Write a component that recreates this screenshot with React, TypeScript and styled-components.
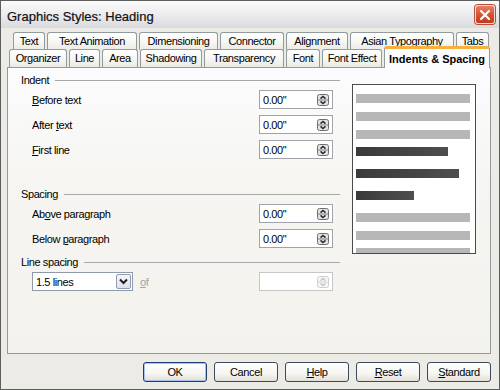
import React from "react";
import styled, { createGlobalStyle } from "styled-components";

const GlobalStyle = createGlobalStyle`
  html, body { margin: 0; padding: 0; background: #ecebe6; }
  body { font-family: "Liberation Sans", Arial, sans-serif; }
  * { box-sizing: border-box; }
`;

const Window = styled.div`
  width: 500px;
  height: 390px;
  border: 1px solid #5e5e5e;
  background: #ecebe6;
  display: flex;
  flex-direction: column;
  font-family: "Liberation Sans", Arial, sans-serif;
  font-size: 11px;
  letter-spacing: -0.4px;
  color: #000;
`;

const TitleBar = styled.div`
  height: 27px;
  flex: none;
  display: flex;
  align-items: center;
  justify-content: space-between;
  padding: 0 4px 0 6px;
  background: linear-gradient(to bottom, #fbfbfc 0%, #eeeef0 45%, #d9dade 100%);
`;

const Title = styled.div`
  font-size: 13px;
  letter-spacing: 0;
  padding-top: 3px;
  color: #111;
  -webkit-text-stroke: 0.2px #111;
`;

const CloseButton = styled.div`
  width: 20px;
  height: 19px;
  border-radius: 3px;
  border: 1px solid #f4d7cf;
  background: linear-gradient(to bottom, #e8806a 0%, #d4502f 55%, #c23a1c 100%);
  box-shadow: 0 0 0 1px #b5523d;
  display: flex;
  align-items: center;
  justify-content: center;
`;

const Body = styled.div`
  flex: 1;
  display: flex;
  flex-direction: column;
  padding: 4px 8px 7px 6px;
`;

const TabStrip = styled.div`
  display: flex;
  flex-direction: column;
`;

const TabRow = styled.div<{ $offset: number; $height: number }>`
  display: flex;
  gap: 2px;
  height: ${(p) => p.$height}px;
  padding-left: ${(p) => p.$offset}px;
  align-items: flex-start;
`;

const Tab = styled.div<{ $width: number; $selected?: boolean }>`
  width: ${(p) => p.$width}px;
  flex: none;
  height: ${(p) => (p.$selected ? 22 : 18)}px;
  margin-top: ${(p) => (p.$selected ? -3 : 0)}px;
  position: relative;
  z-index: ${(p) => (p.$selected ? 2 : 0)};
  display: flex;
  align-items: ${(p) => (p.$selected ? "center" : "flex-start")};
  justify-content: center;
  padding-top: ${(p) => (p.$selected ? 0 : 2)}px;
  border: 1px solid #919b9c;
  border-bottom: none;
  border-radius: 3px 3px 0 0;
  font-weight: ${(p) => (p.$selected ? "bold" : "normal")};
  letter-spacing: ${(p) => (p.$selected ? "0" : "-0.4px")};
  background: ${(p) =>
    p.$selected
      ? "#fcfcfe"
      : "linear-gradient(to bottom, #ffffff 0%, #f7f7f4 50%, #ebeae4 100%)"};
  border-top: ${(p) => (p.$selected ? "3px solid #f6b13e" : "1px solid #919b9c")};
  white-space: nowrap;
`;

const Panel = styled.div`
  height: 287px;
  flex: none;
  border: 1px solid #919b9c;
  background: linear-gradient(to bottom, #fcfcfe 0%, #f6f5f1 40%, #f3f2ed 100%);
  display: flex;
  gap: 12px;
  padding: 5px 0 0 13px;
`;

const LeftColumn = styled.div`
  width: 319px;
  display: flex;
  flex-direction: column;
`;

const SectionHeader = styled.div<{ $gap?: number }>`
  height: 14px;
  margin-top: ${(p) => p.$gap ?? 0}px;
  display: flex;
  align-items: center;
  gap: 6px;
  &::after {
    content: "";
    flex: 1;
    height: 1px;
    background: #a8a8a8;
    margin-top: 1px;
  }
`;

const FieldRow = styled.div`
  height: 25px;
  display: flex;
  align-items: center;
  padding: 0 7px 0 11px;
`;

const Label = styled.div`
  flex: 1;
`;

const SpinBox = styled.div<{ $disabled?: boolean }>`
  width: 74px;
  height: 19px;
  border: 1px solid ${(p) => (p.$disabled ? "#c6c6c6" : "#a0a4aa")};
  background: #fff;
  display: flex;
  align-items: center;
  justify-content: space-between;
  padding: 0 3px 0 3px;
  margin-left: ${(p) => (p.$disabled ? "auto" : "0")};
`;

const OfLabel = styled.div`
  margin-left: 7px;
  color: #a3a3a3;
`;

const Select = styled.div`
  width: 101px;
  height: 19px;
  border: 1px solid #8e9aa9;
  background: #fff;
  display: flex;
  align-items: center;
  justify-content: space-between;
  padding: 0 1px 0 3px;
`;

const DropButton = styled.div`
  width: 15px;
  height: 15px;
  border: 1px solid #8f9cb2;
  border-radius: 2px;
  background: linear-gradient(to bottom, #f4f6fa 0%, #dde2ea 100%);
  display: flex;
  align-items: center;
  justify-content: center;
`;

const Preview = styled.div`
  width: 124px;
  height: 170px;
  margin-top: 11px;
  border: 1px solid #4b4b4b;
  background: #fff;
  overflow: hidden;
  display: flex;
  flex-direction: column;
  padding-left: 3px;
`;

const PreviewBar = styled.div<{ $top: number; $width: number; $dark?: boolean }>`
  flex: none;
  height: 9px;
  margin-top: ${(p) => p.$top}px;
  width: ${(p) => p.$width}px;
  background: ${(p) =>
    p.$dark ? "linear-gradient(to right, #3a3a3a, #4e4e4e)" : "#b7b7b7"};
`;

const ButtonRow = styled.div`
  margin-top: 8px;
  display: flex;
  justify-content: flex-end;
  gap: 7px;
`;

const Button = styled.div<{ $default?: boolean }>`
  width: 64px;
  height: 20px;
  border: 1px solid ${(p) => (p.$default ? "#1c3d78" : "#3d4a5c")};
  border-radius: 3px;
  background: linear-gradient(to bottom, #ffffff 0%, #f6f5f1 60%, #e2dfd6 100%);
  box-shadow: ${(p) => (p.$default ? "inset 0 0 0 1px #a9c4ec" : "none")};
  display: flex;
  align-items: center;
  justify-content: center;
`;

const SpinIcon: React.FC<{ disabled?: boolean }> = ({ disabled }) => {
  const stroke = disabled ? "#cfcfcf" : "#6f6f6f";
  const arrow = disabled ? "#c8c8c8" : "#2a2a2a";
  return (
    <svg width="12" height="12" viewBox="0 0 12 12">
      <rect x="0.5" y="0.5" width="11" height="11" rx="2" fill={disabled ? "#f6f6f6" : "#e2e2e2"} stroke={stroke} />
      <line x1="1" y1="6" x2="11" y2="6" stroke={stroke} strokeWidth="0.8" />
      <polyline points="3.5,4.6 6,2.4 8.5,4.6" fill="none" stroke={arrow} strokeWidth="1.5" />
      <polyline points="3.5,7.4 6,9.6 8.5,7.4" fill="none" stroke={arrow} strokeWidth="1.5" />
    </svg>
  );
};

const Field: React.FC<{ label: React.ReactNode }> = ({ label }) => (
  <FieldRow>
    <Label>{label}</Label>
    <SpinBox>
      <span>0.00"</span>
      <SpinIcon />
    </SpinBox>
  </FieldRow>
);

const row1: [string, number][] = [
  ["Text", 32],
  ["Text Animation", 90],
  ["Dimensioning", 79],
  ["Connector", 64],
  ["Alignment", 62],
  ["Asian Typography", 104],
  ["Tabs", 33],
];

const row2: [string, number][] = [
  ["Organizer", 58],
  ["Line", 31],
  ["Area", 36],
  ["Shadowing", 62],
  ["Transparency", 80],
  ["Font", 34],
  ["Font Effect", 60],
  ["Indents & Spacing", 106],
];

const bars: { top: number; width: number; dark?: boolean }[] = [
  { top: 9, width: 114 },
  { top: 9, width: 114 },
  { top: 9, width: 114 },
  { top: 8, width: 92, dark: true },
  { top: 13, width: 103, dark: true },
  { top: 13, width: 58, dark: true },
  { top: 13, width: 114 },
  { top: 9, width: 114 },
  { top: 8, width: 114 },
];

export default function App() {
  return (
    <>
      <GlobalStyle />
      <Window>
        <TitleBar>
          <Title>Graphics Styles: Heading</Title>
          <CloseButton>
            <svg width="12" height="12" viewBox="0 0 12 12">
              <path d="M2 2 L10 10 M10 2 L2 10" stroke="#fff" strokeWidth="2.2" strokeLinecap="round" />
            </svg>
          </CloseButton>
        </TitleBar>
        <Body>
          <TabStrip>
            <TabRow $offset={6} $height={17}>
              {row1.map(([t, w]) => (
                <Tab key={t} $width={w}>{t}</Tab>
              ))}
            </TabRow>
            <TabRow $offset={2} $height={18}>
              {row2.map(([t, w], i) => (
                <Tab key={t} $width={w} $selected={i === row2.length - 1}>{t}</Tab>
              ))}
            </TabRow>
          </TabStrip>
          <Panel>
            <LeftColumn>
              <SectionHeader>Indent</SectionHeader>
              <Field label={<><u>B</u>efore text</>} />
              <Field label={<>After <u>t</u>ext</>} />
              <Field label={<><u>F</u>irst line</>} />
              <SectionHeader $gap={25}>Spacing</SectionHeader>
              <Field label={<>Ab<u>o</u>ve paragraph</>} />
              <Field label={<>Below <u>p</u>aragraph</>} />
              <SectionHeader $gap={4}>Line spacing</SectionHeader>
              <FieldRow>
                <Select>
                  <span>1.5 lines</span>
                  <DropButton>
                    <svg width="9" height="7" viewBox="0 0 9 7">
                      <polyline points="1,1.5 4.5,5 8,1.5" fill="none" stroke="#1e1e1e" strokeWidth="2" />
                    </svg>
                  </DropButton>
                </Select>
                <OfLabel><u>o</u>f</OfLabel>
                <SpinBox $disabled>
                  <span />
                  <SpinIcon disabled />
                </SpinBox>
              </FieldRow>
            </LeftColumn>
            <Preview>
              {bars.map((b, i) => (
                <PreviewBar key={i} $top={b.top} $width={b.width} $dark={b.dark} />
              ))}
            </Preview>
          </Panel>
          <ButtonRow>
            <Button $default>OK</Button>
            <Button>Cancel</Button>
            <Button><span><u>H</u>elp</span></Button>
            <Button><span><u>R</u>eset</span></Button>
            <Button><span><u>S</u>tandard</span></Button>
          </ButtonRow>
        </Body>
      </Window>
    </>
  );
}
